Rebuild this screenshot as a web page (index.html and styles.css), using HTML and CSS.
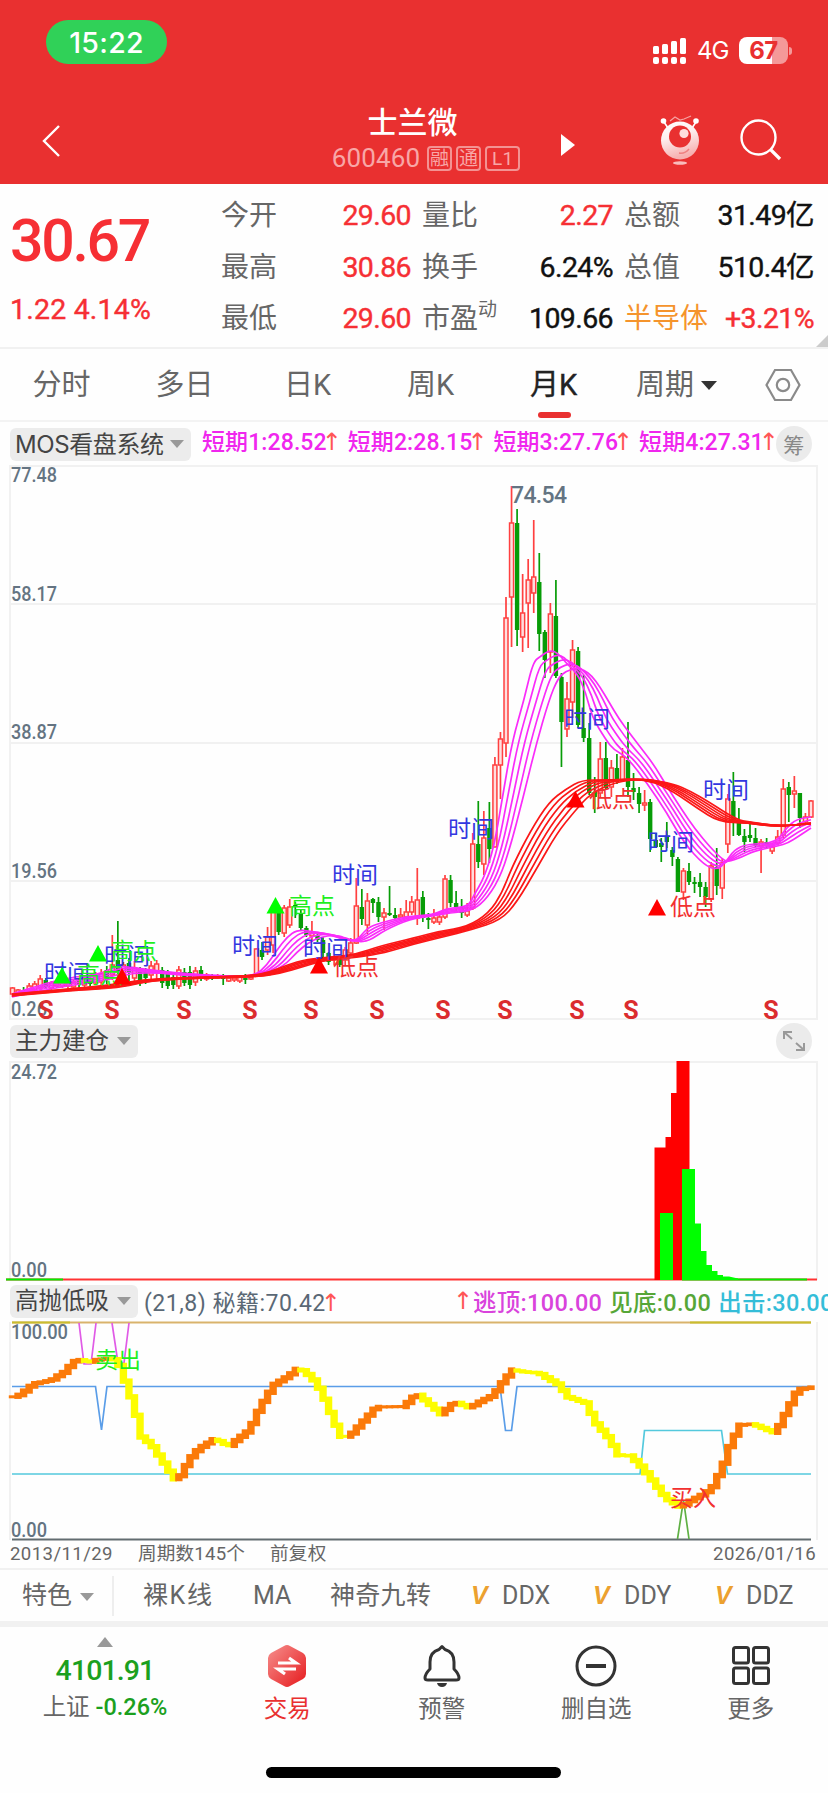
FILE: index.html
```html
<!DOCTYPE html>
<html lang="zh-CN">
<head>
  <meta charset="UTF-8">
  <title>士兰微 600460</title>
  <link rel="stylesheet" href="styles.css">
</head>
<body>
  <header class="top">
    <div class="status">
      <span class="clock">15:22</span>
      <div class="status-right">
        <svg class="signal" width="36" height="28" viewBox="0 0 36 28" fill="#fff">
          <rect x="1" y="9" width="6" height="8" rx="1.5"/><rect x="10" y="7" width="6" height="10" rx="1.5"/>
          <rect x="19" y="4" width="6" height="13" rx="1.5"/><rect x="28" y="1" width="6" height="16" rx="1.5"/>
          <rect x="1" y="20" width="6" height="7" rx="2"/><rect x="10" y="20" width="6" height="7" rx="2"/>
          <rect x="19" y="20" width="6" height="7" rx="2"/><rect x="28" y="20" width="6" height="7" rx="2"/>
        </svg>
        <span class="net">4G</span>
        <span class="battery">67</span><span class="battery-tip"></span>
      </div>
    </div>
    <div class="titlebar">
      <svg class="back" width="20" height="34" viewBox="0 0 20 34"><path d="M18 2 3 17l15 15" fill="none" stroke="#fff" stroke-width="2.4"/></svg>
      <div class="title">
        <h1>士兰微</h1>
        <div class="code">600460 <i>融</i><i>通</i><i class="wide">L1</i></div>
      </div>
      <svg class="next" width="14" height="22" viewBox="0 0 14 22"><path d="M0 0 14 11 0 22z" fill="#fff"/></svg>
      <svg class="robot" width="42" height="52" viewBox="0 0 42 52">
        <defs><linearGradient id="rb" x1="0" y1="0" x2="0.3" y2="1"><stop offset="0" stop-color="#fff"/><stop offset=".45" stop-color="#fdeeee"/><stop offset="1" stop-color="#f7b0b0"/></linearGradient></defs>
        <path d="M5 7l4 6M37 7l-4 6" stroke="#fff" stroke-width="1.6"/>
        <circle cx="4.500" cy="6" r="2.800" fill="#fff"/><circle cx="37" cy="6" r="2.800" fill="#fff"/>
        <path d="M11 6l5-4 5 3 4-1 7-3" fill="none" stroke="#f6a3a3" stroke-width="1.200"/>
        <circle cx="21" cy="25.500" r="19" fill="url(#rb)"/>
        <circle cx="21" cy="21.500" r="11" fill="#e93030"/>
        <circle cx="25" cy="18.500" r="4.600" fill="#fdd"/>
        <path d="M20 38q6 1 10-4" fill="none" stroke="#ef8080" stroke-width="1.500"/>
        <ellipse cx="21" cy="48" rx="7" ry="1.800" fill="#f9bcbc"/>
      </svg>
      <svg class="search" width="42" height="42" viewBox="0 0 42 42" fill="none" stroke="#fff"><circle cx="18.500" cy="18.500" r="17" stroke-width="2.400"/><path d="M30 30l10 10" stroke-width="3.200"/></svg>
    </div>
  </header>

  <section class="quote">
    <div class="price">
      <b>30.67</b>
      <span>1.22 4.14%</span>
    </div>
    <dl class="facts">
      <div><dt>今开</dt><dd class="red">29.60</dd></div>
      <div><dt>量比</dt><dd class="red">2.27</dd></div>
      <div><dt>总额</dt><dd>31.49亿</dd></div>
      <div><dt>最高</dt><dd class="red">30.86</dd></div>
      <div><dt>换手</dt><dd>6.24%</dd></div>
      <div><dt>总值</dt><dd>510.4亿</dd></div>
      <div><dt>最低</dt><dd class="red">29.60</dd></div>
      <div><dt>市盈<sup>动</sup></dt><dd>109.66</dd></div>
      <div><dt class="orange">半导体</dt><dd class="red">+3.21%</dd></div>
    </dl>
    <span class="corner"></span>
  </section>

  <nav class="tabs">
    <a>分时</a><a>多日</a><a>日K</a><a>周K</a><a class="active">月K</a><a>周期<span class="caret"></span></a>
    <svg width="36" height="34" viewBox="0 0 36 34" fill="none" stroke="#8a8a8a" stroke-width="2.200"><path d="M10 2h16l8.500 15L26 32H10L1.500 17z"/><circle cx="18" cy="17" r="6.200"/></svg>
  </nav>

  <div class="ind ind-main">
    <span class="chip">MOS看盘系统<span class="caret"></span></span>
    <span class="term">短期1:28.52<em>↑</em></span>
    <span class="term">短期2:28.15<em>↑</em></span>
    <span class="term">短期3:27.76<em>↑</em></span>
    <span class="term">短期4:27.31<em>↑</em></span>
    <span class="round">筹</span>
  </div>
  <svg class="panel" id="kline" width="828" height="555" viewBox="0 465 828 555"></svg>

  <div class="ind ind-build">
    <span class="chip">主力建仓<span class="caret"></span></span>
    <span class="round">
      <svg width="22" height="20" viewBox="0 0 22 20" fill="none" stroke="#999" stroke-width="2"><path d="M1 8V1h8M1 1l8 7M21 12v7h-8M21 19l-8-7"/></svg>
    </span>
  </div>
  <svg class="panel" id="build" width="828" height="221" viewBox="0 1060 828 221"></svg>

  <div class="ind ind-swing">
    <span class="chip">高抛低吸<span class="caret"></span></span>
    <span class="param">(21,8) 秘籍:70.42<em>↑</em></span>
    <span class="legend"><em>↑</em><span class="c-mag">逃顶:100.00</span><span class="c-green">见底:0.00</span><span class="c-cyan">出击:30.00</span></span>
  </div>
  <svg class="panel" id="swing" width="828" height="220" viewBox="0 1321 828 220"></svg>

  <div class="range"><span>2013/11/29</span><span>周期数145个</span><span>前复权</span><span>2026/01/16</span></div>

  <div class="tools">
    <span class="feature">特色<span class="caret"></span></span>
    <span class="t1">裸K线</span><span class="t2">MA</span><span class="t3">神奇九转</span>
    <span class="dd"><i>V</i>DDX</span><span class="dd"><i>V</i>DDY</span><span class="dd"><i>V</i>DDZ</span>
  </div>

  <footer class="nav">
    <div class="index">
      <span class="up"></span>
      <b>4101.91</b>
      <p>上证 <span>-0.26%</span></p>
    </div>
    <div class="item trade">
      <svg width="40" height="44" viewBox="0 0 40 44">
        <defs><linearGradient id="tr" x1="0" y1="0" x2="1" y2="1"><stop offset="0" stop-color="#f6908e"/><stop offset="1" stop-color="#e6191c"/></linearGradient></defs>
        <path d="M17 2q3-2 6 0l13 7q3 2 3 5v16q0 3-3 5l-13 7q-3 2-6 0L4 35q-3-2-3-5V14q0-3 3-5z" fill="url(#tr)"/>
        <path d="M11 19h18l-7-5M29 25H11l7 5" fill="none" stroke="#fff" stroke-width="3.200"/>
      </svg>
      <span>交易</span>
    </div>
    <div class="item">
      <svg width="40" height="44" viewBox="0 0 40 44" fill="none" stroke="#333" stroke-width="3"><path d="M20 2.500q-2 2-3 3Q8 8 8 18v7q-5 5-5 9 0 2 3 2h28q3 0 3-2 0-4-5-9v-7Q32 8 23 5.500q-1-1-3-3z" stroke-linejoin="round"/><path d="M15 39h10q-1 4-5 4t-5-4z" fill="#333" stroke="none"/></svg>
      <span>预警</span>
    </div>
    <div class="item">
      <svg width="42" height="44" viewBox="0 0 42 44" fill="none" stroke="#333" stroke-width="3"><circle cx="21" cy="22" r="19"/><path d="M11 22h20" stroke-width="4"/></svg>
      <span>删自选</span>
    </div>
    <div class="item">
      <svg width="40" height="44" viewBox="0 0 40 44" fill="none" stroke="#333" stroke-width="3"><rect x="2.500" y="3.500" width="15" height="15.500" rx="2"/><rect x="22.500" y="3.500" width="15" height="15.500" rx="2"/><rect x="2.500" y="24" width="15" height="15.500" rx="2"/><rect x="22.500" y="24" width="15" height="15.500" rx="2"/></svg>
      <span>更多</span>
    </div>
  </footer>
  <div class="home"></div>

  <script src="chart.js"></script>
</body>
</html>
```
FILE: styles.css
```css
* { box-sizing: border-box; }
body {
  margin: 0;
  width: 828px;
  height: 1793px;
  overflow: hidden;
  background: #fefefe;
  color: #666;
  font-family: Roboto, "Noto Sans CJK SC", sans-serif;
}
h1, p, dl, dd { margin: 0; }
i, em { font-style: normal; }
.red { color: #f62f34; }
.caret {
  display: inline-block;
  border: 7px solid transparent;
  border-top: 8px solid #999;
  border-bottom: 0;
}

/* header */
.top { height: 184px; background: #e93030; color: #fff; }
.status { display: flex; justify-content: space-between; padding: 20px 36px 0 46px; height: 84px; }
.clock {
  width: 121px;
  height: 44px;
  border-radius: 22px;
  background: #30d158;
  font: 500 28.5px/46px Inter, sans-serif;
  letter-spacing: 0.3px;
  text-align: center;
}
.status-right { display: flex; align-items: center; height: 61px; }
.net { margin: 0 9px; width: 33px; font: 24px/30px Inter, sans-serif; letter-spacing: -1px; }
.battery {
  width: 49px;
  height: 27px;
  border-radius: 8px;
  background: linear-gradient(90deg, #fff 67%, #f49999 67%);
  color: #e93030;
  font: 700 24px/27px Inter, sans-serif;
  letter-spacing: -0.5px;
  text-align: center;
}
.battery-tip { width: 3px; height: 8px; margin-left: 1px; border-radius: 0 3px 3px 0; background: #f49999; }
.titlebar { display: flex; height: 100px; padding-left: 41px; }
.back { margin-top: 40px; }
.title { width: 210px; margin-left: 247px; text-align: center; }
.title h1 { margin-left: -1px; padding-top: 21px; font-size: 30px; font-weight: 500; line-height: 36px; }
.code { display: flex; align-items: center; justify-content: center; margin-left: 23px; width: 190px; height: 34px; color: #f8a7a7; font-size: 26px; letter-spacing: 0.1px; }
.code i { width: 25px; height: 25px; margin-left: 4px; border: 2px solid #f39393; border-radius: 4px; font-size: 19px; line-height: 21px; text-align: center; }
.code i:first-of-type { margin-left: 7px; }
.code .wide { width: 35px; }
.next { margin: 50px 0 0 43px; }
.robot { margin: 31px 0 0 84px; }
.search { margin: 35px 0 0 39px; }

/* quote */
.quote { position: relative; display: flex; height: 165px; padding: 6px 14px 0 10px; border-bottom: 2px solid #f1f1f1; }
.price { width: 211px; color: #f62f34; }
.price b { display: block; height: 102px; font-size: 59px; font-weight: 500; line-height: 101px; letter-spacing: -2.3px; }
.price span { display: block; font-size: 28.5px; -webkit-text-stroke: 0.4px #f62f34; line-height: 36px; letter-spacing: 0.2px; }
.facts { display: grid; grid-template-columns: 190px 191px 190px; column-gap: 11px; grid-auto-rows: 51.5px; }
.facts div { display: flex; justify-content: space-between; line-height: 51px; }
.facts dt { font-size: 28px; white-space: nowrap; }
.facts dd { font-size: 28.5px; letter-spacing: -0.6px; white-space: nowrap; -webkit-text-stroke: 0.4px currentColor; }
.facts dd:not(.red) { color: #111; }
.facts sup { position: relative; top: -12px; font-size: 19px; line-height: 0; vertical-align: baseline; }
.facts .orange { color: #f5942c; }
.corner { position: absolute; right: 0; bottom: 0; border-left: 12px solid transparent; border-bottom: 12px solid #ccc; }

/* period tabs */
.tabs { display: grid; grid-template-columns: repeat(6, 123px) 1fr; align-items: center; height: 73px; border-bottom: 2px solid #f3f3f3; }
.tabs a { position: relative; height: 71px; font-size: 29px; line-height: 73px; text-align: center; white-space: nowrap; }
.tabs .active { color: #222; -webkit-text-stroke: 0.4px #222; }
.tabs .active::after { content: ""; position: absolute; left: 46px; bottom: 2px; width: 33px; height: 6px; border-radius: 3px; background: #e93030; }
.tabs .caret { border-width: 9px 8px 0; border-top-color: #333; margin: 0 0 5px 7px; }
.tabs svg { margin-left: 27px; }

/* indicator rows */
.ind { display: flex; align-items: center; padding-left: 10px; white-space: nowrap; font-size: 23px; }
.ind em { color: #f55; display: inline-block; width: 9px; font-family: "DejaVu Sans", sans-serif; font-size: 24px; line-height: 24px; text-indent: -5px; }
.chip { display: flex; flex-shrink: 0; align-items: center; justify-content: space-between; width: 128px; height: 33px; padding: 0 7px 0 5px; border-radius: 6px; background: #ececec; color: #444; font-size: 23.5px; line-height: 33px; }
.ind-main { height: 43px; padding-top: 1px; }
.ind-main .chip { width: 181px; font-size: 24px; font-family: Inter, "Noto Sans CJK SC", sans-serif; letter-spacing: -0.4px; margin-right: 11px; }
.term { flex-shrink: 0; width: 145.7px; line-height: 30px; margin-top: -2px; color: #f026ee; font-weight: 500; letter-spacing: 0.1px; }
.round { display: flex; align-items: center; justify-content: center; width: 36px; height: 36px; border-radius: 50%; background: #ebebeb; color: #888; font-size: 21px; }
.ind-main .round { flex-shrink: 0; margin-left: -9px; }
.ind-build { height: 40px; justify-content: space-between; padding: 2px 16px 0 10px; }
.ind-swing { height: 40px; overflow: hidden; }
.param { flex-shrink: 0; margin-left: 6px; width: 192px; color: #5a6875; letter-spacing: 0.5px; }
.legend { display: flex; flex-shrink: 0; align-items: center; margin-left: 122px; font-size: 23.5px; font-weight: 500; letter-spacing: 0.3px; }
.legend em { margin-right: 6px; font-weight: 400; }
.legend span { margin-right: 7px; }
.c-mag { color: #d943dc; }
.c-green { color: #56a637; }
.c-cyan { color: #34bdd8; }
.panel { display: block; overflow: visible; }
.range { display: flex; height: 27px; padding: 0 12px 0 10px; font-size: 18.6px; line-height: 27px; }
.range span { margin-right: 25px; letter-spacing: 0.2px; }
.range span:first-child, .range span:last-child { letter-spacing: 0.4px; }
.range span:last-child { margin: 0 0 0 auto; }

/* feature bar */
.tools { display: flex; align-items: center; height: 53px; border-top: 2px solid #f1f1f1; font-size: 25px; white-space: nowrap; }
.tools > span { flex-shrink: 0; line-height: 40px; }
.feature { width: 114px; padding-left: 22px; border-right: 2px solid #eee; }
.tools .caret { margin: 0 0 3px 8px; }
.t1 { width: 111px; padding-left: 29px; letter-spacing: 1.6px; }
.t2 { width: 76px; padding-left: 28px; }
.t3 { width: 170px; padding-left: 29px; letter-spacing: 0.3px; }
.dd { width: 122px; }
.dd i { display: inline-block; width: 31px; color: #eca12f; font: italic 700 25px "Liberation Sans", sans-serif; }

/* bottom bar */
.nav { display: flex; height: 125px; border-top: 6px solid #f1f1f1; }
.index { width: 210px; text-align: center; }
.up { display: block; width: 0; margin: 10px auto 0 97px; border: 8px solid transparent; border-top: 0; border-bottom: 10px solid #999; }
.index b { display: block; height: 44px; color: #1ba01e; font-size: 28.5px; font-weight: 500; line-height: 48px; letter-spacing: -0.9px; }
.index p { font-size: 23.5px; line-height: 32px; }
.index p span { color: #1ba01e; font-weight: 500; }
.item { display: flex; flex-direction: column; align-items: center; width: 154.5px; padding-top: 17px; }
.item span { font-size: 23.5px; line-height: 43px; }
.item svg { height: 44px; }
.trade span { color: #e93030; }
.home { width: 295px; height: 11px; margin: 21px auto 0 266px; border-radius: 6px; background: #000; }

/* charts */
.grid { fill: none; stroke: #f1f1f1; stroke-width: 2; }
.axis { fill: #647482; font-size: 20px; font-weight: 500; }
.peak { font-size: 23px; }
.mark-s { fill: #db2c2e; font-size: 25px; font-weight: 700; text-anchor: middle; }
.tag { font-size: 23px; font-family: "Noto Sans CJK SC", sans-serif; }
.tag-time { fill: #3237e0; }
.tag-high { fill: #1eee1e; }
.tag-low { fill: #f23030; }
```
FILE: chart.js
```js
const N = 145;
const X0 = 12.5;
const STEP = 5.545;
const xAt = i => X0 + STEP * i;

// high, body top, body bottom, low, direction (r = up, g = down)
const candles = `
987 988 994 997 r|989 990 993 994 r|987 990 991 994 g|983 986 991 994 r|981 984 990 992 r|975 979 988 991 r|
978 980 987 989 g|981 983 988 990 r|981 983 986 988 r|980 982 986 988 r|980 983 986 989 r|979 982 987 989 r|
978 981 985 988 g|975 979 985 989 r|976 978 984 987 g|972 975 983 985 r|969 974 982 986 r|966 970 980 984 g|
935 965 975 980 r|921 960 972 978 g|962 965 976 984 r|958 963 973 981 g|961 968 978 984 r|967 971 982 986 g|
968 972 978 984 g|961 966 975 982 r|960 964 972 980 r|967 970 983 988 g|970 974 986 989 g|974 977 985 989 g|
966 970 986 989 r|968 972 983 986 g|966 972 985 989 g|967 971 982 986 r|966 970 978 981 g|973 975 979 981 r|
974 976 979 980 g|974 976 978 979 r|974 976 979 985 g|977 978 981 982 r|975 978 980 982 r|975 977 981 983 r|
974 978 980 984 g|974 977 979 980 r|948 949 975 975 r|942 950 957 960 g|927 937 950 955 r|905 912 945 953 r|
908 912 932 935 g|905 908 933 937 r|899 907 925 928 r|902 905 907 918 g|910 913 928 930 g|926 928 935 937 g|
921 933 936 942 r|932 935 940 942 g|937 940 953 957 g|952 953 962 965 g|955 957 960 965 r|957 958 965 967 g|
947 950 960 965 r|938 943 953 954 r|878 906 943 944 r|889 907 919 925 g|893 901 925 934 r|898 899 903 913 g|
897 902 917 922 g|908 913 917 930 r|886 913 915 916 g|908 915 918 919 g|908 915 917 918 r|900 912 917 919 r|
896 902 912 915 r|868 900 918 925 r|891 897 918 922 g|913 918 920 929 g|909 918 922 924 r|915 917 922 925 r|
875 879 917 919 r|875 880 903 907 g|891 903 907 911 g|899 907 913 918 g|903 911 915 917 r|833 844 908 910 r|
801 844 862 868 g|811 838 864 875 r|802 828 849 863 g|757 765 847 847 r|732 739 765 799 r|597 618 743 757 r|
486 523 597 647 r|509 523 630 646 g|574 613 637 652 r|559 580 603 648 r|520 577 593 613 r|553 582 634 651 g|
630 632 660 678 g|603 614 652 673 r|580 616 676 678 g|673 677 722 767 g|682 699 729 737 r|640 650 702 718 r|
647 651 725 728 g|675 728 738 742 g|723 738 793 795 g|777 792 797 813 g|742 759 793 797 r|742 758 788 790 g|
760 768 787 797 r|754 768 782 784 g|748 757 780 780 r|722 760 787 797 g|773 788 792 800 g|787 793 804 813 g|
790 803 805 811 r|799 802 839 852 g|833 840 847 848 g|838 843 847 862 g|822 836 842 848 g|847 850 857 866 g|
857 859 892 892 g|868 871 892 900 r|863 871 882 885 g|877 882 883 893 g|873 882 887 897 g|882 887 897 907 g|
862 866 899 902 r|848 867 886 895 g|858 863 888 899 r|794 799 844 853 r|772 801 822 836 g|808 823 835 836 g|
829 836 842 852 g|823 835 838 842 g|828 838 845 847 g|839 842 846 873 r|838 842 846 848 g|843 847 851 854 r|
830 837 843 845 r|779 789 835 838 r|782 787 795 822 g|776 791 794 808 r|793 793 818 828 g|813 817 822 823 r|
800 801 817 818 r`.split('|').map(s => s.trim().split(' '));

// fastest line x,y and slowest line x,y; the lines between are interpolated
const shortBand = [
  [12,994,12,997],[40,985,40,991],[67,978,67,986],[100,974,100,981],[112,968,116,978],[122,966,132,973],
  [160,971,160,973],[190,974,190,976],[225,976,225,977],[255,976,262,976],[267,965,284,966],[277,950,297,952],
  [287,937,308,943],[297,930,320,937],[312,931,335,935],[330,935,343,937],[355,943,357,942],[367,928,369,941],
  [380,923,385,930],[407,916,410,919],[433,915,433,916],[447,908,450,913],[468,907,470,911],[474,895,484,902],
  [484,878,499,880],[494,847,510,848],[502,800,523,798],[512,742,536,745],[524,700,549,700],[533,662,558,678],
  [541,656,566,671],[550,650,577,668],[558,653,584,670],[566,663,592,676],[577,673,600,687],[586,693,609,702],
  [592,717,619,719],[606,740,631,735],[614,750,641,748],[627,757,654,765],[647,783,666,785],[667,813,682,810],
  [684,843,695,829],[704,865,710,847],[717,870,722,859],[726,862,728,862],[734,850,742,857],[747,844,754,851],
  [776,843,778,846],[786,828,788,843],[797,819,799,836],[811,817,811,828]
];
const longBand = [
  [12,994,12,996],[67,989,67,991],[100,986,100,989],[122,983,122,987],[150,979,150,981],[200,977,200,978],
  [250,976,258,977],[270,972,282,973],[287,965,302,967],[307,959,322,961],[333,957,340,959],[357,954,360,957],
  [380,946,384,953],[414,938,414,944],[440,931,443,937],[467,927,471,930],[489,913,501,920],[502,893,517,902],
  [512,867,537,868],[531,830,557,833],[549,802,574,812],[566,789,591,793],[582,780,614,783],[604,780,630,780],
  [634,779,647,779],[654,782,674,784],[674,792,690,791],[697,808,709,802],[719,822,737,820],[747,823,751,822],
  [777,827,777,826],[811,823,811,824]
];

function smooth(pts) {
  let d = `M${pts[0]}`;
  for (let i = 1; i < pts.length - 1; i++) {
    const [x, y] = pts[i], [nx, ny] = pts[i + 1];
    d += `Q${x} ${y} ${(x + nx) / 2} ${(y + ny) / 2}`;
  }
  return d + `L${pts[pts.length - 1]}`;
}

function band(points, count, color) {
  let out = '';
  for (let k = 0; k < count; k++) {
    const t = k / (count - 1);
    const pts = points.map(([a, b, c, d]) => [a + (c - a) * t, b + (d - b) * t]);
    out += `<path d="${smooth(pts)}" fill="none" stroke="${color}" stroke-width="1.7"/>`;
  }
  return out;
}

const tri = (x, y, color) => `<path d="M${x} ${y}l9 16.500h-18z" fill="${color}"/>`;
const tag = (x, y, cls, text) => `<text x="${x}" y="${y + 8}" class="tag tag-${cls}">${text}</text>`;
const axis = (y, text, w) => `<text x="11" y="${y}" class="axis" textLength="${w}" lengthAdjust="spacingAndGlyphs">${text}</text>`;

function drawKline() {
  let s = '<path class="grid" d="M10 466H817V1019H10zM10 604H817M10 743H817M10 881H817"/>';
  s += axis(482, '77.48', 46) + axis(601, '58.17', 46) + axis(739, '38.87', 46) + axis(878, '19.56', 46) + axis(1016, '0.26', 36);
  candles.forEach(([h, t, b, l, dir], i) => {
    const x = xAt(i);
    if (dir === 'g') {
      s += `<path d="M${x} ${h}V${l}" stroke="#079c07" stroke-width="1.7"/><rect x="${x - 2.2}" y="${t}" width="4.4" height="${Math.max(b - t, 2)}" fill="#079c07"/>`;
    } else {
      s += `<path d="M${x} ${h}V${t}M${x} ${b}V${l}" stroke="#ff4040" stroke-width="1.7"/><rect x="${x - 2}" y="${t}" width="4" height="${b - t}" fill="#ffdede" stroke="#ff4040" stroke-width="1.5"/>`;
    }
  });
  s += band(shortBand, 5, '#fa2cfa') + band(longBand, 6, '#fb1717');
  s += '<text x="511" y="503" class="axis peak" textLength="56">74.54</text>';
  [[44,973],[104,956],[232,946],[303,949],[332,875],[448,829],[564,719],[648,842],[703,790]]
    .forEach(([x, y]) => s += tag(x, y, 'time', '时间'));
  s += tri(62, 967, '#0f0') + tri(98, 945, '#0f0') + tri(275.500, 897, '#0f0');
  s += tag(77, 975, 'high', '高点') + tag(111, 951, 'high', '高点') + tag(289, 906, 'high', '高点');
  s += tri(122, 968, '#f00') + tri(319, 957, '#f00') + tri(575.500, 791, '#f00') + tri(657, 899, '#f00');
  s += tag(333, 967, 'low', '低点') + tag(589, 799, 'low', '低点') + tag(670, 907, 'low', '低点');
  [46, 112, 184, 250, 311, 377, 443, 505, 577, 631, 771]
    .forEach(x => s += `<text x="${x}" y="1018.500" class="mark-s">S</text>`);
  document.getElementById('kline').innerHTML = s;
}

function drawBuild() {
  let s = '<path class="grid" d="M10 1280V1062H817V1280"/>';
  s += axis(1079, '24.72', 46) + axis(1277, '0.00', 36);
  s += '<path d="M6 1279.500H817" stroke="#f33" stroke-width="2"/><path d="M6 1279.500H63M682 1279.500H807" stroke="#0e0" stroke-width="2"/>';
  s += '<path d="M654.500 1280V1147.500H665.500V1137H671V1093H676.500V1061H689.500V1280z" fill="#f00"/>';
  s += '<path d="M660 1280V1213H673V1280zM682 1280V1169H695V1223.500H701V1251H706.500V1265H712V1271H717.500V1275H723V1276.500H729L738 1278.500V1280z" fill="#0f0"/>';
  document.getElementById('build').innerHTML = s;
}

const swingKeys = [
  [12,1397],[20,1394],[32,1384],[50,1380],[63,1372],[72,1362],[82,1359],[87,1363],[95,1360],[110,1358],[117,1363],
  [123,1380],[129,1397],[135,1417],[140,1437],[150,1445],[158,1457],[167,1470],[173,1479],[180,1475],[187,1460],
  [197,1449],[213,1439],[228,1446],[235,1440],[248,1430],[258,1408],[272,1385],[287,1376],[297,1368],[310,1377],
  [320,1392],[333,1423],[340,1437],[348,1436],[360,1423],[375,1407],[402,1406.5],[413,1396],[417,1395],[441,1415],
  [446,1408],[454,1402],[469,1408],[474,1404],[492,1395],[501,1382],[511,1370],[524,1372],[537,1373],[556,1384],
  [567,1397],[584,1403],[594,1423],[607,1438],[617,1455],[629,1456],[641,1468],[654,1485],[664,1498],[679,1507],
  [687,1502],[704,1493],[711,1487],[721,1467],[729,1443],[739,1425],[751,1424],[774,1433],[784,1413],[796,1390],[812,1387]
];

function valueAt(x) {
  for (let i = 1; i < swingKeys.length; i++) {
    const [x1, y1] = swingKeys[i - 1], [x2, y2] = swingKeys[i];
    if (x <= x2) return y1 + (y2 - y1) * (x - x1) / (x2 - x1);
  }
  return swingKeys[swingKeys.length - 1][1];
}

function drawSwing() {
  let s = '<path class="grid" d="M10 1322V1540M817 1322V1540"/>';
  s += '<path d="M12 1322.500H811" stroke="#d9b36c" stroke-width="2"/><path d="M12 1322.500H70M690 1322.500H811" stroke="#c9bd2e" stroke-width="2"/>';
  s += axis(1339, '100.00', 57) + axis(1537, '0.00', 36);
  s += '<g fill="none" stroke-width="1.700">';
  s += '<path d="M12 1386.500H95.500L101.500 1430L107 1386.500H500L505.500 1430.500H511.500L517 1386.500H811" stroke="#5a9de8"/>';
  s += '<path d="M12 1474H640L644.500 1430.500H721.500L727.500 1474H811" stroke="#54c9dd"/>';
  s += '<path d="M79 1323L84 1364H91L96 1323M112 1323L118 1363H124L129 1323" stroke="#e05be6"/>';
  s += '<path d="M12 1539.500H811" stroke="#626c70" stroke-width="2"/><path d="M677.500 1539L683.500 1500L689 1539" stroke="#5fb044"/></g>';
  let prev = valueAt(X0);
  for (let i = 0; i < N; i++) {
    const y = valueAt(xAt(i));
    const up = i === 0 || y <= prev;
    const pad = 1.5 + Math.min(Math.abs(y - prev) * 0.3, 1.2);
    s += `<rect x="${xAt(i) - 3.700}" y="${Math.min(y, prev) - pad}" width="7.400" height="${Math.abs(y - prev) + pad * 2}" fill="${up ? '#fb7a09' : '#fdfd00'}"/>`;
    prev = y;
  }
  s += tag(95, 1360, 'high', '卖出') + tag(670, 1498, 'low', '买入');
  document.getElementById('swing').innerHTML = s;
}

drawKline();
drawBuild();
drawSwing();
```
